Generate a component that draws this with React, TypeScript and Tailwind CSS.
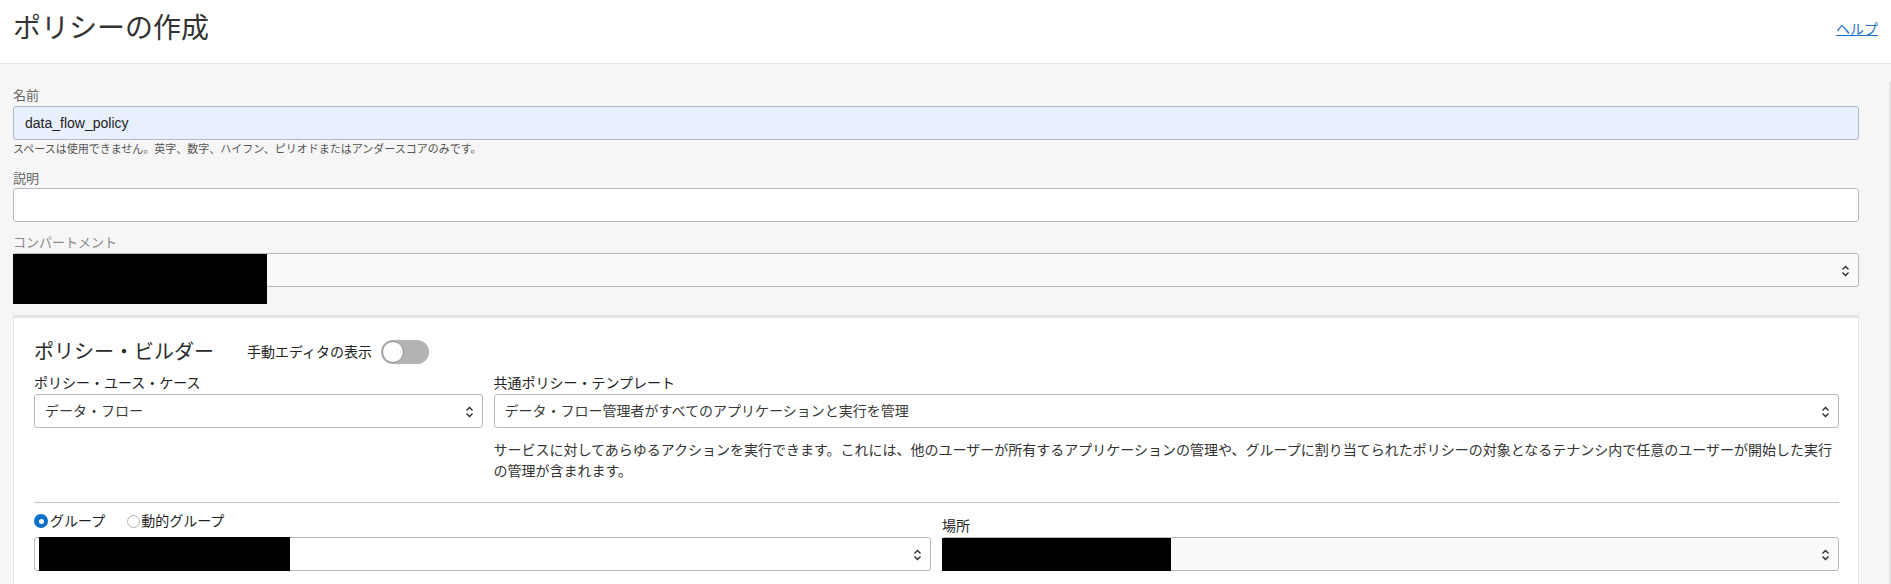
import React from 'react';

function Chevrons() {
  return (
    <svg width="9" height="14" viewBox="0 0 9 14" fill="none" stroke="#2b2b2b" strokeWidth="1.4">
      <polyline points="1.5,5.5 4.5,2.5 7.5,5.5" />
      <polyline points="1.5,8.5 4.5,11.5 7.5,8.5" />
    </svg>
  );
}

type SelectProps = {
  value?: string;
  muted?: boolean;
  children?: React.ReactNode;
};

function SelectBox({ value, muted, children }: SelectProps) {
  return (
    <div
      className={`relative flex h-[34px] items-center rounded-[3px] border border-[#b5bac3] pl-[10px] text-[14px] text-[#3a3a3a] ${
        muted ? 'bg-[#fafafa]' : 'bg-white'
      }`}
    >
      {value && <span className="whitespace-nowrap">{value}</span>}
      {children}
      <span className="absolute right-[8px] top-[10px]">
        <Chevrons />
      </span>
    </div>
  );
}

function Redacted({ className }: { className: string }) {
  return <div className={`absolute bg-black ${className}`} />;
}

export default function App() {
  return (
    <div className="min-h-[584px] w-full bg-[#f6f6f6] font-['Liberation_Sans','Noto_Sans_CJK_JP',sans-serif] text-[#333]">
      <header className="flex h-[64px] items-start justify-between border-b border-[#e3e3e3] bg-white pl-[13px] pr-[13px] pt-[11px]">
        <h1 className="text-[28px] font-normal leading-[36px] text-[#333]">ポリシーの作成</h1>
        <a href="#" className="pt-[8px] text-[14px] leading-[20px] text-[#1a73c8] underline">
          ヘルプ
        </a>
      </header>

      <div className="flex">
        <div className="flex-1 pl-[13px] pr-[30px] pt-[24px]">
          <label className="block text-[13px] leading-[16px] text-[#666]">名前</label>
          <div className="mt-[2px] flex h-[34px] items-center rounded-[3px] border border-[#b0b8c6] bg-[#e8f0fe] pl-[11px] text-[14px] text-[#222]">
            data_flow_policy
          </div>
          <p className="mt-[2px] text-[11px] leading-[14px] text-[#555]">
            スペースは使用できません。英字、数字、ハイフン、ピリオドまたはアンダースコアのみです。
          </p>

          <label className="mt-[15px] block text-[13px] leading-[16px] text-[#666]">説明</label>
          <div className="mt-[1px] h-[34px] rounded-[3px] border border-[#b5bac3] bg-white" />

          <label className="mt-[13px] block text-[13px] leading-[16px] text-[#8a8a8a]">コンパートメント</label>
          <div className="relative mt-[2px]">
            <SelectBox muted />
            <Redacted className="left-0 top-[1px] h-[50px] w-[254px]" />
          </div>

          <section className="mt-[28px] border-x border-t-[3px] border-x-[#e6e6e6] border-t-[#e4e4e8] bg-white pb-[24px] pl-[20px] pr-[19px] pt-[22px]">
            <div className="flex h-[24px] items-center">
              <h2 className="text-[20px] font-normal leading-[24px] text-[#2a2a2a]">ポリシー・ビルダー</h2>
              <span className="ml-[33px] text-[14px] leading-[18px] text-[#222]">手動エディタの表示</span>
              <div className="relative ml-[9px] h-[24px] w-[48px] rounded-full bg-[#b3b3b3]">
                <div className="absolute left-[1px] top-[1px] h-[22px] w-[22px] rounded-full border border-[#8f8f8f] bg-white" />
              </div>
            </div>

            <div className="mt-[11px] grid grid-cols-[1fr_3fr] gap-x-[11px]">
              <div>
                <label className="mb-[3px] block text-[14px] leading-[16px] text-[#222]">
                  ポリシー・ユース・ケース
                </label>
                <SelectBox value="データ・フロー" />
              </div>
              <div>
                <label className="mb-[3px] block text-[14px] leading-[16px] text-[#222]">
                  共通ポリシー・テンプレート
                </label>
                <SelectBox value="データ・フロー管理者がすべてのアプリケーションと実行を管理" />
                <p className="mt-[12px] text-[14px] leading-[21px] text-[#333]">
                  <span className="block whitespace-nowrap">
                    サービスに対してあらゆるアクションを実行できます。これには、他のユーザーが所有するアプリケーションの管理や、グループに割り当てられたポリシーの対象となるテナンシ内で任意のユーザーが開始した実行
                  </span>
                  <span className="block">の管理が含まれます。</span>
                </p>
              </div>
            </div>

            <div className="mt-[20px] h-px bg-[#bfc3ca]" />

            <div className="grid grid-cols-2 items-end gap-x-[11px]">
              <div>
                <div className="mb-[6px] mt-[8px] flex h-[20px] items-center text-[14px] text-[#222]">
                  <span className="flex h-[14px] w-[14px] items-center justify-center rounded-full bg-[#0a6fc9]">
                    <span className="h-[5px] w-[5px] rounded-full bg-white" />
                  </span>
                  <span className="ml-[2px]">グループ</span>
                  <span className="ml-[22px] h-[13px] w-[13px] rounded-full border border-[#b5b5b5] bg-white" />
                  <span className="ml-[1px]">動的グループ</span>
                </div>
                <div className="relative">
                  <SelectBox />
                  <Redacted className="left-[5px] top-0 h-[34px] w-[251px]" />
                </div>
              </div>
              <div>
                <label className="mb-[2px] block text-[14px] leading-[18px] text-[#222]">場所</label>
                <div className="relative">
                  <SelectBox muted />
                  <Redacted className="left-0 top-[1px] h-[33px] w-[229px]" />
                </div>
              </div>
            </div>
          </section>
        </div>
        <div className="mt-[18px] w-[2px] self-stretch bg-[#e4e4e4]" />
      </div>
    </div>
  );
}
